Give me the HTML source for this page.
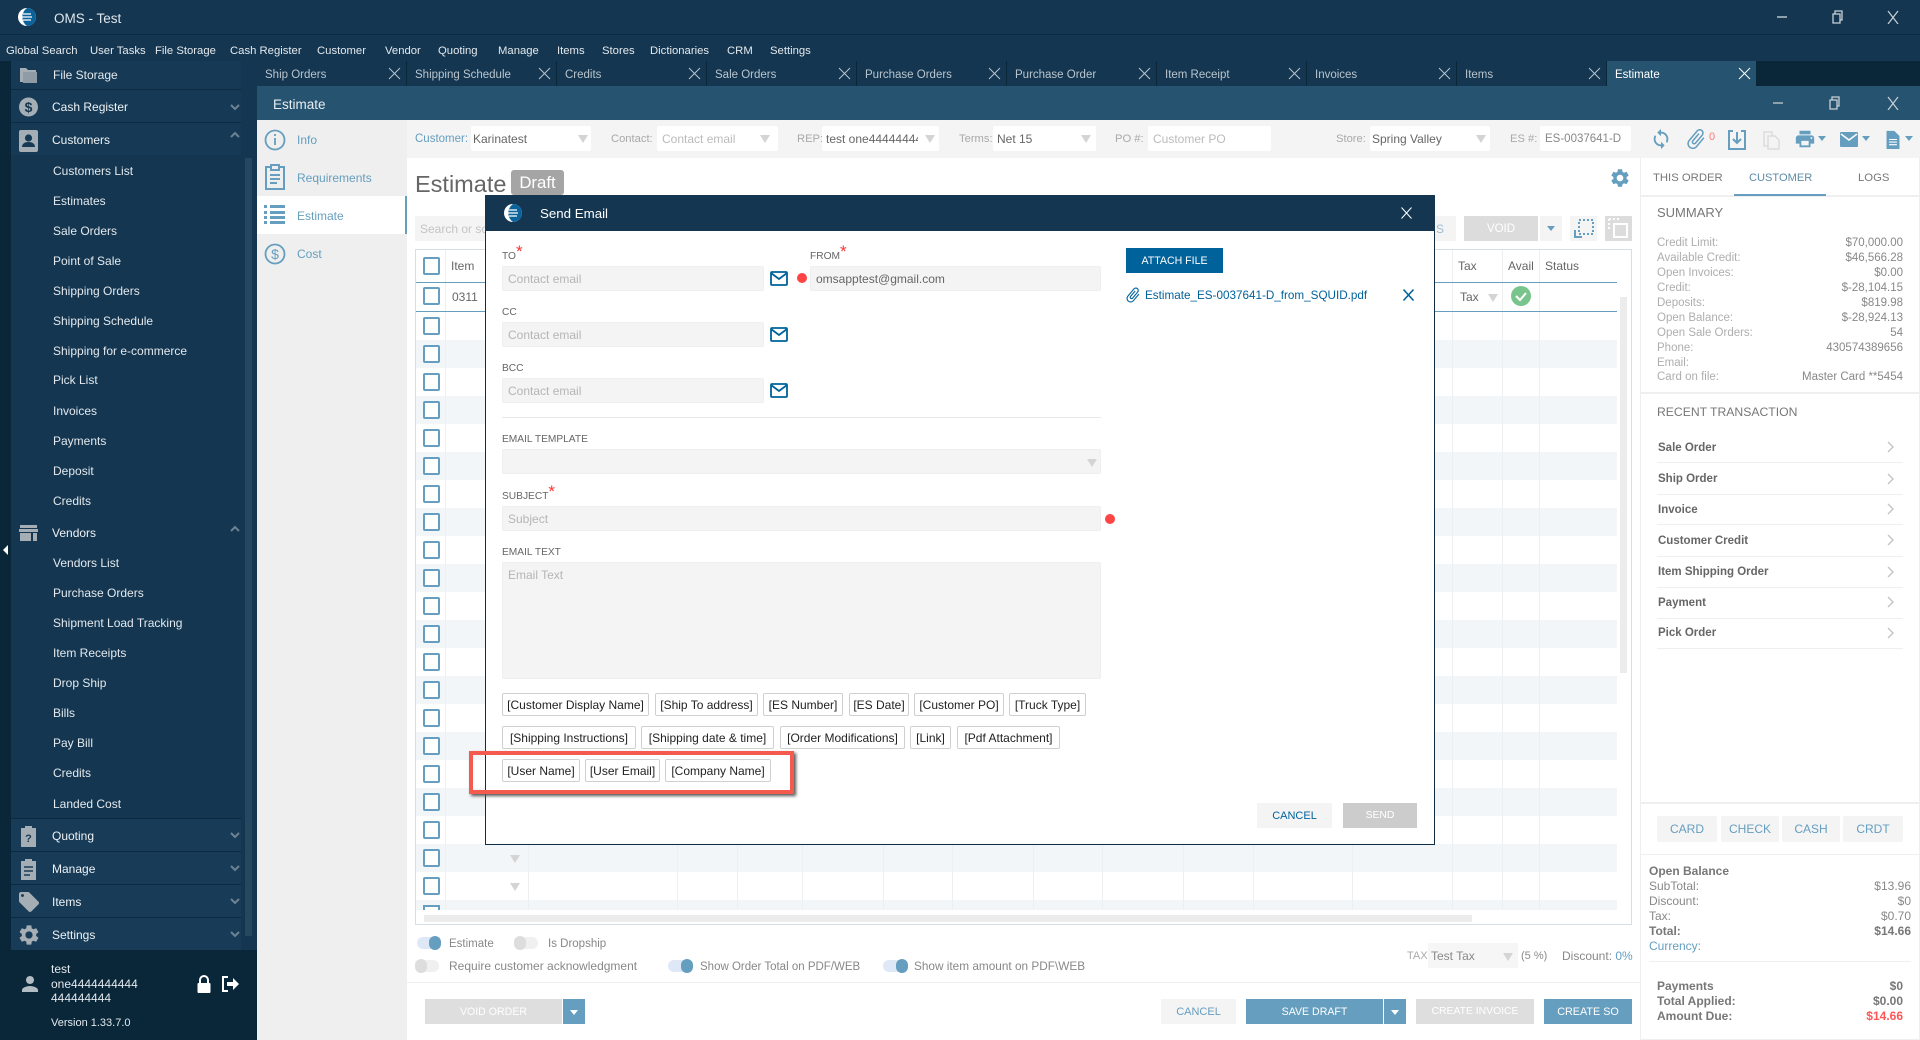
<!DOCTYPE html>
<html lang="en"><head><meta charset="utf-8"><title>OMS - Test</title>
<style>
html,body{margin:0;padding:0;width:1920px;height:1040px;overflow:hidden;background:#fff;font-family:"Liberation Sans",sans-serif;font-size:12px;color:#666}
div,span,svg{position:absolute;box-sizing:border-box}
.t{white-space:nowrap;line-height:16px;height:16px}
.mn{color:#e3e9ee;top:43px;font-size:11.3px}
.tab{top:61px;height:25px;width:149px;background:#143650;color:#b9c5ce;line-height:29px;padding-left:8px;white-space:nowrap;font-size:11.5px}
.x{top:6px;left:131px;width:13px;height:13px}
.s{color:#e3e9ee;left:53px}
.p{color:#eef2f5;left:52px}
.ln{left:11px;width:230px;height:1px;background:#0c2b42}
.lab{color:#9ab8cb}
.gl{color:#a9a9a9;font-size:11.2px}
.f{background:#fff;height:25px;top:126px;border-radius:2px}
.c{width:0;height:0;border-left:5px solid transparent;border-right:5px solid transparent;border-top:8px solid #d4d4d4}
.cb{left:423px;width:17px;height:18px;border:2px solid #659ebf;border-radius:2px;background:#fff}
.v{top:250px;width:1px;height:660px;background:#edf0f2}
.st{left:416px;width:1201px;height:28px;background:#f3f6f9}
.sr{left:1657px;color:#aeaeae;font-size:11.5px}
.sv{right:17px;color:#888;font-size:11.5px}
.rt{left:1658px;color:#666;font-weight:bold;font-size:11.5px}
.sep{left:1641px;width:278px;height:1px;background:#efefef}
.ml{color:#666;left:502px;font-size:10.2px}
.in{background:#f4f4f4;border:1px solid #efefef;border-radius:2px;height:25px}
.ph{color:#b5b5b5;left:508px}
.star{color:#f33;font-size:17px;line-height:0;vertical-align:2px;position:static}
.tag{border:1px solid #d0d0d0;border-radius:2px;background:#fff;color:#222;height:23px;line-height:23px;text-align:center;white-space:nowrap;font-size:12px}
.btn{height:25px;line-height:26px;text-align:center;white-space:nowrap;font-size:10.6px}
.pb{top:816px;height:26px;line-height:26px;background:#f4f4f4;color:#659ebf;text-align:center;border-radius:2px}
.tg{width:24px;height:12px;border-radius:6px}
.kn{width:12px;height:14px;border-radius:7px}
.o{left:1649px;color:#888}
.ov{right:9px;color:#888}
.b{font-weight:bold;color:#777}
</style></head><body>

<!-- title + menu -->
<div style="left:0;top:0;width:1920px;height:61px;background:#143650"></div>
<div style="left:0;top:34px;width:1920px;height:1px;background:#0b2a40"></div>
<svg style="left:17px;top:7px" width="20" height="20" viewBox="0 0 20 20"><circle cx="10" cy="10" r="9" fill="#fff"/><path d="M10 1a9 9 0 0 1 0 18A11 11 0 0 1 10 1z" fill="#0b639c"/><path d="M6 7h8M5 10h10M6 13h8" stroke="#fff" stroke-width="1.200"/></svg>
<div class="t" style="left:54px;top:11px;color:#dfe6eb;font-size:13.500px">OMS - Test</div>
<svg style="left:1777px;top:10px" width="130" height="14" viewBox="0 0 130 14" fill="none" stroke="#c8d1d8"><path d="M0 7h10" stroke-width="2" stroke="#8fa0ad"/><path d="M56 4h7v9h-7zM58 4V1h7v9h-2" stroke-width="1.300"/><path d="M111 1l10 13M121 1l-10 13" stroke-width="1.200"/></svg>
<div class="t mn" style="left:6px">Global Search</div>
<div class="t mn" style="left:90px">User Tasks</div>
<div class="t mn" style="left:155px">File Storage</div>
<div class="t mn" style="left:230px">Cash Register</div>
<div class="t mn" style="left:317px">Customer</div>
<div class="t mn" style="left:385px">Vendor</div>
<div class="t mn" style="left:438px">Quoting</div>
<div class="t mn" style="left:498px">Manage</div>
<div class="t mn" style="left:557px">Items</div>
<div class="t mn" style="left:602px">Stores</div>
<div class="t mn" style="left:650px">Dictionaries</div>
<div class="t mn" style="left:727px">CRM</div>
<div class="t mn" style="left:770px">Settings</div>

<!-- sidebar -->
<div style="left:0;top:61px;width:257px;height:979px;background:#0a2639"></div>
<div style="left:11px;top:61px;width:246px;height:889px;background:#143650"></div>
<div style="left:245px;top:158px;width:7px;height:778px;background:#25475f"></div>
<div style="left:11px;top:61px;width:230px;height:28px;background:#163a55"></div>
<div style="left:11px;top:89px;width:230px;height:66px;background:#163a55"></div>
<div style="left:11px;top:818px;width:230px;height:132px;background:#183c58"></div>
<div class="ln" style="top:89px"></div><div class="ln" style="top:122px"></div><div class="ln" style="top:155px;background:transparent"></div>
<div class="ln" style="top:818px"></div><div class="ln" style="top:851px"></div><div class="ln" style="top:884px"></div><div class="ln" style="top:917px"></div>
<div style="left:3px;top:545px;width:0;height:0;border-top:5px solid transparent;border-bottom:5px solid transparent;border-right:5px solid #fff"></div>

<svg style="left:18px;top:66px" width="20" height="18" viewBox="0 0 20 18" fill="#a5aeb4"><path d="M2 2h6l2 2h8v2H5v10H2z"/><path d="M5 6h14v11H5z" opacity=".85"/></svg>
<svg style="left:19px;top:96px" width="19" height="22" viewBox="0 0 19 22"><circle cx="9.500" cy="11" r="9.500" fill="#a5aeb4"/><text x="9.500" y="16" text-anchor="middle" font-size="14" font-weight="bold" fill="#143650" font-family="Liberation Sans">$</text></svg>
<svg style="left:19px;top:130px" width="19" height="22" viewBox="0 0 19 22"><rect width="19" height="22" rx="2" fill="#a5aeb4"/><circle cx="9.500" cy="8" r="3.600" fill="#163a55"/><path d="M3 17c0-3.500 3-5 6.500-5s6.500 1.500 6.500 5z" fill="#163a55"/></svg>
<svg style="left:19px;top:525px" width="19" height="16" viewBox="0 0 19 16" fill="#a5aeb4"><path d="M1 0h17v3H1zM0 4h19v3H0zM1 8h11v8H1zM14 8h4v8h-4z"/></svg>
<svg style="left:20px;top:825px" width="17" height="22" viewBox="0 0 17 22"><path d="M1 3h4V1h7v2h4v19H1z" fill="#a5aeb4"/><text x="8.500" y="17" text-anchor="middle" font-size="11" font-weight="bold" fill="#183c58" font-family="Liberation Sans">?</text></svg>
<svg style="left:20px;top:858px" width="17" height="22" viewBox="0 0 17 22"><path d="M1 3h4V1h7v2h4v19H1z" fill="#a5aeb4"/><path d="M4 9h9M4 13h9M4 17h6" stroke="#183c58" stroke-width="1.500"/></svg>
<svg style="left:17px;top:890px" width="24" height="24" viewBox="0 0 24 24" fill="#a5aeb4"><path d="M21.410 11.580l-9-9C12.050 2.220 11.550 2 11 2H4c-1.100 0-2 .9-2 2v7c0 .55.220 1.050.590 1.420l9 9c.36.36.86.580 1.410.580.55 0 1.050-.22 1.410-.59l7-7c.37-.36.590-.86.590-1.410 0-.55-.23-1.060-.59-1.420zM5.500 7C4.670 7 4 6.330 4 5.500S4.670 4 5.500 4 7 4.670 7 5.500 6.330 7 5.500 7z"/></svg>
<svg style="left:17px;top:923px" width="24" height="24" viewBox="0 0 24 24" fill="#a5aeb4"><path d="M19.140 12.940c.04-.3.060-.61.060-.94 0-.32-.02-.64-.07-.94l2.030-1.580c.18-.14.230-.41.120-.61l-1.920-3.320c-.12-.22-.37-.29-.59-.22l-2.390.96c-.5-.38-1.030-.7-1.620-.94l-.36-2.540c-.04-.24-.24-.41-.48-.41h-3.840c-.24 0-.43.17-.47.41l-.36 2.540c-.59.24-1.130.57-1.620.94l-2.390-.96c-.22-.08-.47 0-.59.22L2.740 8.870c-.12.21-.08.47.12.61l2.030 1.580c-.05.3-.09.63-.09.94s.02.64.07.94l-2.030 1.580c-.18.14-.23.41-.12.61l1.920 3.320c.12.22.37.29.59.22l2.390-.96c.5.38 1.030.7 1.620.94l.36 2.540c.05.24.24.41.48.41h3.840c.24 0 .44-.17.47-.41l.36-2.540c.59-.24 1.130-.56 1.620-.94l2.390.96c.22.08.47 0 .59-.22l1.920-3.320c.12-.22.070-.47-.12-.61l-2.010-1.580zM12 15.600c-1.980 0-3.600-1.620-3.600-3.600s1.620-3.600 3.600-3.600 3.600 1.620 3.600 3.600-1.620 3.600-3.600 3.600z"/></svg>

<svg style="left:230px;top:100px" width="10" height="850" viewBox="0 0 10 850" fill="none" stroke="#6d8293" stroke-width="2"><path d="M1 5l4 4 4-4M1 37l4-4 4 4M1 431l4-4 4 4M1 733l4 4 4-4M1 766l4 4 4-4M1 799l4 4 4-4M1 832l4 4 4-4"/></svg>

<div class="t s" style="top:67px">File Storage</div>
<div class="t p" style="top:99px">Cash Register</div>
<div class="t p" style="top:132px">Customers</div>
<div class="t s" style="top:163px">Customers List</div>
<div class="t s" style="top:193px">Estimates</div>
<div class="t s" style="top:223px">Sale Orders</div>
<div class="t s" style="top:253px">Point of Sale</div>
<div class="t s" style="top:283px">Shipping Orders</div>
<div class="t s" style="top:313px">Shipping Schedule</div>
<div class="t s" style="top:343px">Shipping for e-commerce</div>
<div class="t s" style="top:372px">Pick List</div>
<div class="t s" style="top:403px">Invoices</div>
<div class="t s" style="top:433px">Payments</div>
<div class="t s" style="top:463px">Deposit</div>
<div class="t s" style="top:493px">Credits</div>
<div class="t p" style="top:525px">Vendors</div>
<div class="t s" style="top:555px">Vendors List</div>
<div class="t s" style="top:585px">Purchase Orders</div>
<div class="t s" style="top:615px">Shipment Load Tracking</div>
<div class="t s" style="top:645px">Item Receipts</div>
<div class="t s" style="top:675px">Drop Ship</div>
<div class="t s" style="top:705px">Bills</div>
<div class="t s" style="top:735px">Pay Bill</div>
<div class="t s" style="top:765px">Credits</div>
<div class="t s" style="top:796px">Landed Cost</div>
<div class="t p" style="top:828px">Quoting</div>
<div class="t p" style="top:861px">Manage</div>
<div class="t p" style="top:894px">Items</div>
<div class="t p" style="top:927px">Settings</div>

<svg style="left:18px;top:972px" width="24" height="24" viewBox="0 0 24 24" fill="#b2bcc3"><path d="M12 12c2.210 0 4-1.790 4-4s-1.790-4-4-4-4 1.790-4 4 1.790 4 4 4zm0 2c-2.670 0-8 1.340-8 4v2h16v-2c0-2.660-5.330-4-8-4z"/></svg>
<div class="t s" style="left:51px;top:961px">test</div>
<div class="t s" style="left:51px;top:976px">one4444444444</div>
<div class="t s" style="left:51px;top:990px">444444444</div>
<div class="t s" style="left:51px;top:1015px;font-size:11px">Version 1.33.7.0</div>
<svg style="left:196px;top:975px" width="16" height="18" viewBox="0 0 16 18"><path d="M4 8V5a4 4 0 0 1 8 0v3" fill="none" stroke="#fff" stroke-width="2"/><rect x="1.500" y="8" width="13" height="10" rx="1" fill="#fff"/></svg>
<svg style="left:221px;top:975px" width="18" height="18" viewBox="0 0 18 18"><path d="M7 2H2v14h5" fill="none" stroke="#fff" stroke-width="2"/><path d="M6 7h6V3l6 6-6 6v-4H6z" fill="#fff"/></svg>

<!-- tabs -->
<div style="left:257px;top:61px;width:1663px;height:25px;background:#0a2639"></div>
<div class="tab" style="left:257px">Ship Orders<svg class="x" viewBox="0 0 13 13" stroke="#b9c5ce" fill="none"><path d="M1 1l11 11M12 1L1 12"/></svg></div>
<div class="tab" style="left:407px">Shipping Schedule<svg class="x" viewBox="0 0 13 13" stroke="#b9c5ce" fill="none"><path d="M1 1l11 11M12 1L1 12"/></svg></div>
<div class="tab" style="left:557px">Credits<svg class="x" viewBox="0 0 13 13" stroke="#b9c5ce" fill="none"><path d="M1 1l11 11M12 1L1 12"/></svg></div>
<div class="tab" style="left:707px">Sale Orders<svg class="x" viewBox="0 0 13 13" stroke="#b9c5ce" fill="none"><path d="M1 1l11 11M12 1L1 12"/></svg></div>
<div class="tab" style="left:857px">Purchase Orders<svg class="x" viewBox="0 0 13 13" stroke="#b9c5ce" fill="none"><path d="M1 1l11 11M12 1L1 12"/></svg></div>
<div class="tab" style="left:1007px">Purchase Order<svg class="x" viewBox="0 0 13 13" stroke="#b9c5ce" fill="none"><path d="M1 1l11 11M12 1L1 12"/></svg></div>
<div class="tab" style="left:1157px">Item Receipt<svg class="x" viewBox="0 0 13 13" stroke="#b9c5ce" fill="none"><path d="M1 1l11 11M12 1L1 12"/></svg></div>
<div class="tab" style="left:1307px">Invoices<svg class="x" viewBox="0 0 13 13" stroke="#b9c5ce" fill="none"><path d="M1 1l11 11M12 1L1 12"/></svg></div>
<div class="tab" style="left:1457px">Items<svg class="x" viewBox="0 0 13 13" stroke="#b9c5ce" fill="none"><path d="M1 1l11 11M12 1L1 12"/></svg></div>
<div class="tab" style="left:1607px;background:#26536f;color:#fff">Estimate<svg class="x" viewBox="0 0 13 13" stroke="#fff" fill="none"><path d="M1 1l11 11M12 1L1 12"/></svg></div>

<!-- window header -->
<div style="left:257px;top:86px;width:1663px;height:34px;background:#26536f"></div>
<div class="t" style="left:273px;top:97px;color:#e8eef2;font-size:13.500px">Estimate</div>
<svg style="left:1773px;top:96px" width="134" height="14" viewBox="0 0 134 14" fill="none" stroke="#c8d1d8"><path d="M0 7h10" stroke-width="2" stroke="#8fa0ad"/><path d="M57 4h7v9h-7zM59 4V1h7v9h-2" stroke-width="1.300"/><path d="M115 1l10 13M125 1l-10 13" stroke-width="1.200"/></svg>

<!-- subnav -->
<div style="left:257px;top:120px;width:150px;height:920px;background:#efefef"></div>
<div style="left:257px;top:196px;width:150px;height:38px;background:#fff;border-right:2px solid #659ebf"></div>
<svg style="left:264px;top:128px" width="22" height="24" viewBox="0 0 22 24" fill="none" stroke="#659ebf" stroke-width="1.800"><circle cx="11" cy="12" r="9.500"/><path d="M11 10v7M11 6v2"/></svg>
<svg style="left:264px;top:164px" width="22" height="26" viewBox="0 0 22 26" fill="none" stroke="#659ebf" stroke-width="2"><path d="M7 3H2v22h18V3h-5"/><path d="M7 1h8v5H7zM6 11h10M6 15h10M6 19h7"/></svg>
<svg style="left:264px;top:205px" width="21" height="20" viewBox="0 0 21 20" fill="#659ebf"><path d="M0 0h3v3H0zM6 0h15v3H6zM0 6h3v3H0zM6 6h15v3H6zM0 11h3v3H0zM6 11h15v3H6zM0 16h3v3H0zM6 16h15v3H6z"/></svg>
<svg style="left:264px;top:242px" width="22" height="24" viewBox="0 0 22 24"><circle cx="11" cy="12" r="9.500" fill="none" stroke="#659ebf" stroke-width="1.800"/><text x="11" y="17" text-anchor="middle" font-size="14" fill="#659ebf" font-family="Liberation Sans">$</text></svg>
<div class="t" style="left:297px;top:132px;color:#659ebf">Info</div>
<div class="t" style="left:297px;top:170px;color:#659ebf">Requirements</div>
<div class="t" style="left:297px;top:208px;color:#659ebf">Estimate</div>
<div class="t" style="left:297px;top:246px;color:#659ebf">Cost</div>

<!-- top form row -->
<div style="left:407px;top:120px;width:1513px;height:38px;background:#f4f4f4"></div>
<div class="t" style="left:415px;top:131px;color:#659ebf;font-size:11.500px">Customer:</div>
<div class="f" style="left:471px;width:120px"></div><div class="t" style="left:473px;top:131px;color:#666">Karinatest</div><div class="c" style="left:578px;top:135px"></div>
<div class="t gl" style="left:611px;top:131px">Contact:</div>
<div class="f" style="left:657px;width:121px"></div><div class="t" style="left:662px;top:131px;color:#bbb">Contact email</div><div class="c" style="left:760px;top:135px"></div>
<div class="t gl" style="left:797px;top:131px">REP:</div>
<div class="f" style="left:822px;width:117px"></div><div class="t" style="left:826px;top:131px;color:#666;width:92px;overflow:hidden">test one4444444444</div><div class="c" style="left:925px;top:135px"></div>
<div class="t gl" style="left:959px;top:131px">Terms:</div>
<div class="f" style="left:993px;width:103px"></div><div class="t" style="left:997px;top:131px;color:#666">Net 15</div><div class="c" style="left:1081px;top:135px"></div>
<div class="t gl" style="left:1115px;top:131px">PO #:</div>
<div class="f" style="left:1148px;width:123px"></div><div class="t" style="left:1153px;top:131px;color:#bbb">Customer PO</div>
<div class="t gl" style="left:1336px;top:131px">Store:</div>
<div class="f" style="left:1370px;width:120px"></div><div class="t" style="left:1372px;top:131px;color:#666">Spring Valley</div><div class="c" style="left:1476px;top:135px"></div>
<div class="t gl" style="left:1510px;top:131px">ES #:</div>
<div class="f" style="left:1540px;width:91px"></div><div class="t" style="left:1545px;top:131px;color:#888;font-size:11.500px">ES-0037641-D</div>

<!-- right toolbar icons -->
<svg style="left:1650px;top:128px" width="22" height="22" viewBox="0 0 24 24" fill="#659ebf"><path d="M12 4V1L8 5l4 4V6c3.310 0 6 2.690 6 6 0 1.010-.25 1.970-.7 2.800l1.460 1.460C19.540 15.030 20 13.570 20 12c0-4.420-3.580-8-8-8zm0 14c-3.310 0-6-2.690-6-6 0-1.010.25-1.970.7-2.800L5.240 7.740C4.460 8.970 4 10.430 4 12c0 4.420 3.580 8 8 8v3l4-4-4-4v3z"/></svg>
<svg style="left:1684px;top:127px" width="24" height="24" viewBox="0 0 24 24" fill="#659ebf"><g transform="rotate(40 12 12)"><path d="M16.500 6v11.500c0 2.210-1.790 4-4 4s-4-1.790-4-4V5c0-1.380 1.120-2.500 2.500-2.500s2.500 1.120 2.500 2.500v10.500c0 .55-.45 1-1 1s-1-.45-1-1V6H10v9.500c0 1.380 1.120 2.500 2.500 2.500s2.500-1.120 2.500-2.500V5c0-2.210-1.790-4-4-4S7 2.790 7 5v12.500c0 3.040 2.460 5.500 5.500 5.500s5.500-2.460 5.500-5.500V6h-1.500z"/></g></svg>
<div class="t" style="left:1709px;top:129px;color:#f77;font-size:11px">0</div>
<svg style="left:1728px;top:130px" width="18" height="20" viewBox="0 0 18 20" fill="none" stroke="#659ebf" stroke-width="2"><path d="M5 1H1v18h16V1h-4M9 2v11M5 9l4 4 4-4"/></svg>
<svg style="left:1763px;top:131px" width="17" height="19" viewBox="0 0 17 19" fill="none" stroke="#dcdcdc" stroke-width="1.500"><path d="M1 1h8v4H5v10H1zM5 5h7l4 4v9H5z"/></svg>
<svg style="left:1794px;top:128px" width="22" height="22" viewBox="0 0 24 24" fill="#659ebf"><path d="M19 8H5c-1.660 0-3 1.340-3 3v6h4v4h12v-4h4v-6c0-1.660-1.340-3-3-3zm-3 11H8v-5h8v5zm3-7c-.55 0-1-.45-1-1s.45-1 1-1 1 .45 1 1-.45 1-1 1zm-1-9H6v4h12V3z"/></svg>
<div class="c" style="left:1818px;top:136px;border-left-width:4px;border-right-width:4px;border-top:5px solid #659ebf"></div>
<svg style="left:1840px;top:132px" width="18" height="15" viewBox="0 0 18 15"><rect width="18" height="15" fill="#659ebf" rx="1"/><path d="M1 2l8 6 8-6" fill="none" stroke="#fff" stroke-width="1.500"/></svg>
<div class="c" style="left:1862px;top:136px;border-left-width:4px;border-right-width:4px;border-top:5px solid #659ebf"></div>
<svg style="left:1886px;top:130px" width="14" height="19" viewBox="0 0 15 22"><path d="M0 1h9l6 6v15H0z" fill="#659ebf"/><path d="M3 11h9M3 14h9M3 17h9" stroke="#fff" stroke-width="1.300"/></svg>
<div class="c" style="left:1905px;top:136px;border-left-width:4px;border-right-width:4px;border-top:5px solid #659ebf"></div>

<!-- main body -->
<div class="t" style="left:415px;top:169px;height:30px;line-height:30px;font-size:23.500px;color:#666">Estimate</div>
<div style="left:511px;top:170px;width:53px;height:25px;line-height:26px;background:#a5a5a5;border-radius:3px;color:#fff;text-align:center;font-size:16.800px">Draft</div>
<svg style="left:1609px;top:167px" width="22" height="22" viewBox="0 0 24 24" fill="#659ebf"><path d="M19.140 12.940c.04-.3.060-.61.060-.94 0-.32-.02-.64-.07-.94l2.030-1.580c.18-.14.230-.41.120-.61l-1.920-3.320c-.12-.22-.37-.29-.59-.22l-2.390.96c-.5-.38-1.030-.7-1.620-.94l-.36-2.540c-.04-.24-.24-.41-.48-.41h-3.840c-.24 0-.43.17-.47.41l-.36 2.540c-.59.24-1.130.57-1.620.94l-2.390-.96c-.22-.08-.47 0-.59.22L2.740 8.870c-.12.21-.08.47.12.61l2.030 1.580c-.05.3-.09.63-.09.94s.02.64.07.94l-2.030 1.580c-.18.14-.23.41-.12.61l1.920 3.320c.12.22.37.29.59.22l2.390-.96c.5.38 1.030.7 1.620.94l.36 2.540c.05.24.24.41.48.41h3.840c.24 0 .44-.17.47-.41l.36-2.540c.59-.24 1.130-.56 1.620-.94l2.390.96c.22.08.47 0 .59-.22l1.920-3.320c.12-.22.070-.47-.12-.61l-2.010-1.580zM12 15.600c-1.980 0-3.600-1.620-3.600-3.600s1.620-3.600 3.600-3.600 3.600 1.620 3.600 3.600-1.620 3.600-3.600 3.600z"/></svg>

<div style="left:415px;top:216px;width:1041px;height:25px;background:#f4f4f4"></div>
<div class="t" style="left:420px;top:221px;color:#c4c4c4">Search or scan</div>
<div class="t" style="left:1436px;top:221px;color:#9dbed3">S</div>
<div class="btn" style="left:1464px;top:216px;width:74px;background:#dcdcdc;color:#fff;font-size:11.500px">VOID</div>
<div style="left:1540px;top:216px;width:22px;height:25px;background:#f4f4f4"></div>
<div class="c" style="left:1547px;top:226px;border-left-width:4px;border-right-width:4px;border-top:5px solid #659ebf"></div>
<div style="left:1570px;top:216px;width:27px;height:25px;background:#f4f4f4"></div>
<svg style="left:1574px;top:218px" width="20" height="20" viewBox="0 0 20 20" fill="none" stroke="#659ebf" stroke-width="2"><path d="M1 12v7h7" /><path d="M5 2h14v14H5z" stroke-dasharray="2 2"/></svg>
<div style="left:1605px;top:216px;width:27px;height:25px;background:#dcdcdc"></div>
<svg style="left:1608px;top:218px" width="21" height="21" viewBox="0 0 21 21" fill="none" stroke="#fff" stroke-width="2"><path d="M6 6h13v13H6z"/><path d="M1 1h10" stroke-dasharray="2 2"/><path d="M1 1v10" stroke-dasharray="2 2"/></svg>

<!-- table -->
<div style="left:415px;top:249px;width:1217px;height:676px;border:1px solid #d4dfe6;background:#fff"></div>
<div class="st" style="top:340px"></div><div class="st" style="top:396px"></div><div class="st" style="top:452px"></div><div class="st" style="top:508px"></div><div class="st" style="top:564px"></div><div class="st" style="top:620px"></div><div class="st" style="top:676px"></div><div class="st" style="top:732px"></div><div class="st" style="top:788px"></div><div class="st" style="top:844px"></div><div class="st" style="top:900px;height:10px"></div>
<div class="v" style="left:445px"></div><div class="v" style="left:528px"></div><div class="v" style="left:677px"></div><div class="v" style="left:737px"></div><div class="v" style="left:802px"></div><div class="v" style="left:883px"></div><div class="v" style="left:952px"></div><div class="v" style="left:1033px"></div><div class="v" style="left:1102px"></div><div class="v" style="left:1183px"></div><div class="v" style="left:1253px"></div><div class="v" style="left:1352px"></div><div class="v" style="left:1452px"></div><div class="v" style="left:1502px"></div><div class="v" style="left:1539px"></div>
<div style="left:416px;top:282px;width:1201px;height:1px;background:#659ebf"></div>
<div style="left:416px;top:311px;width:1201px;height:1px;background:#659ebf"></div>
<div class="t" style="left:451px;top:258px;color:#666">Item</div>
<div class="t" style="left:1458px;top:258px;color:#666">Tax</div>
<div class="t" style="left:1508px;top:258px;color:#666">Avail</div>
<div class="t" style="left:1545px;top:258px;color:#666">Status</div>
<div class="t" style="left:452px;top:289px;color:#666">0311</div>
<div class="t" style="left:1460px;top:289px;color:#666">Tax</div>
<div class="c" style="left:1488px;top:294px"></div>
<svg style="left:1511px;top:286px" width="20" height="20" viewBox="0 0 20 20"><circle cx="10" cy="10" r="10" fill="#78c48c"/><path d="M5 10l4 4 6-7" fill="none" stroke="#fff" stroke-width="2"/></svg>
<div class="cb" style="top:257px"></div><div class="cb" style="top:287px"></div><div class="cb" style="top:317px"></div><div class="cb" style="top:345px"></div><div class="cb" style="top:373px"></div><div class="cb" style="top:401px"></div><div class="cb" style="top:429px"></div><div class="cb" style="top:457px"></div><div class="cb" style="top:485px"></div><div class="cb" style="top:513px"></div><div class="cb" style="top:541px"></div><div class="cb" style="top:569px"></div><div class="cb" style="top:597px"></div><div class="cb" style="top:625px"></div><div class="cb" style="top:653px"></div><div class="cb" style="top:681px"></div><div class="cb" style="top:709px"></div><div class="cb" style="top:737px"></div><div class="cb" style="top:765px"></div><div class="cb" style="top:793px"></div><div class="cb" style="top:821px"></div><div class="cb" style="top:849px"></div><div class="cb" style="top:877px"></div>
<div style="left:423px;top:905px;width:17px;height:5px;border:2px solid #659ebf;border-bottom:0;background:#fff"></div>
<div class="c" style="left:510px;top:855px"></div><div class="c" style="left:510px;top:883px"></div>
<div style="left:1620px;top:297px;width:7px;height:376px;background:#ececec"></div>
<div style="left:424px;top:915px;width:1048px;height:7px;background:#ececec"></div>

<!-- toggles -->
<div class="tg" style="left:417px;top:937px;background:#dfe8f6"></div><div class="kn" style="left:429px;top:936px;background:#659ebf"></div>
<div class="t" style="left:449px;top:936px;color:#888;font-size:11.500px">Estimate</div>
<div class="tg" style="left:514px;top:937px;background:#f0f0f0"></div><div class="kn" style="left:514px;top:936px;background:#ddd"></div>
<div class="t" style="left:548px;top:936px;color:#888;font-size:11.500px">Is Dropship</div>
<div class="tg" style="left:415px;top:960px;background:#f0f0f0"></div><div class="kn" style="left:415px;top:959px;background:#ddd"></div>
<div class="t" style="left:449px;top:958px;color:#888">Require customer acknowledgment</div>
<div class="tg" style="left:668px;top:960px;background:#dfe8f6"></div><div class="kn" style="left:681px;top:959px;background:#659ebf"></div>
<div class="t" style="left:700px;top:959px;color:#888;font-size:11.500px">Show Order Total on PDF/WEB</div>
<div class="tg" style="left:883px;top:960px;background:#dfe8f6"></div><div class="kn" style="left:896px;top:959px;background:#659ebf"></div>
<div class="t" style="left:914px;top:958px;color:#888;font-size:11.800px">Show item amount on PDF\WEB</div>
<div class="t" style="left:1407px;top:948px;color:#aaa;font-size:11px">TAX</div>
<div style="left:1428px;top:943px;width:90px;height:25px;background:#f6f6f6"></div>
<div class="t" style="left:1431px;top:948px;color:#888">Test Tax</div><div class="c" style="left:1503px;top:953px"></div>
<div class="t" style="left:1521px;top:948px;color:#888;font-size:11px">(5 %)</div>
<div class="t" style="left:1562px;top:948px;color:#888">Discount: <span style="position:static;color:#659ebf">0%</span></div>

<!-- footer -->
<div style="left:407px;top:982px;width:1233px;height:1px;background:#efefef"></div>
<div class="btn" style="left:425px;top:999px;width:137px;background:#dedede;color:#fff">VOID ORDER</div>
<div style="left:563px;top:999px;width:22px;height:25px;background:#659ebf"></div><div class="c" style="left:570px;top:1010px;border-left-width:4px;border-right-width:4px;border-top:5px solid #fff"></div>
<div class="btn" style="left:1161px;top:999px;width:75px;background:#f4f4f4;color:#659ebf;font-size:11px">CANCEL</div>
<div class="btn" style="left:1246px;top:999px;width:137px;background:#659ebf;color:#fff">SAVE DRAFT</div>
<div style="left:1384px;top:999px;width:22px;height:25px;background:#659ebf"></div><div class="c" style="left:1391px;top:1010px;border-left-width:4px;border-right-width:4px;border-top:5px solid #fff"></div>
<div class="btn" style="left:1416px;top:999px;width:118px;background:#dedede;color:#fff;font-size:10.400px">CREATE INVOICE</div>
<div class="btn" style="left:1544px;top:999px;width:88px;background:#659ebf;color:#fff;font-size:10.800px">CREATE SO</div>

<!-- right panel -->
<div style="left:1640px;top:158px;width:280px;height:882px;background:#fff;border-left:1px solid #efefef;border-right:1px solid #efefef;border-bottom:1px solid #efefef"></div>
<div class="t" style="left:1653px;top:170px;color:#777;font-size:11.300px">THIS ORDER</div>
<div class="t" style="left:1749px;top:170px;color:#5f8ba6;font-size:11.100px">CUSTOMER</div>
<div class="t" style="left:1858px;top:170px;color:#777;font-size:11.300px">LOGS</div>
<div class="sep" style="top:195px;height:2px"></div>
<div style="left:1734px;top:194px;width:92px;height:2px;background:#659ebf"></div>
<div class="t" style="left:1657px;top:205px;color:#777;font-size:13px">SUMMARY</div>
<div class="t sr" style="top:235px">Credit Limit:</div><div class="t sv" style="top:235px">$70,000.00</div>
<div class="t sr" style="top:250px">Available Credit:</div><div class="t sv" style="top:250px">$46,566.28</div>
<div class="t sr" style="top:265px">Open Invoices:</div><div class="t sv" style="top:265px">$0.00</div>
<div class="t sr" style="top:280px">Credit:</div><div class="t sv" style="top:280px">$-28,104.15</div>
<div class="t sr" style="top:295px">Deposits:</div><div class="t sv" style="top:295px">$819.98</div>
<div class="t sr" style="top:310px">Open Balance:</div><div class="t sv" style="top:310px">$-28,924.13</div>
<div class="t sr" style="top:325px">Open Sale Orders:</div><div class="t sv" style="top:325px">54</div>
<div class="t sr" style="top:340px">Phone:</div><div class="t sv" style="top:340px">430574389656</div>
<div class="t sr" style="top:355px">Email:</div>
<div class="t sr" style="top:369px">Card on file:</div><div class="t sv" style="top:369px">Master Card **5454</div>
<div class="sep" style="top:392px;height:2px"></div>
<div class="t" style="left:1657px;top:404px;color:#777;font-size:12.200px">RECENT TRANSACTION</div>
<div class="t rt" style="top:440px">Sale Order</div><div class="sep" style="top:462px;left:1657px;width:246px"></div>
<div class="t rt" style="top:471px">Ship Order</div><div class="sep" style="top:494px;left:1657px;width:246px"></div>
<div class="t rt" style="top:502px">Invoice</div><div class="sep" style="top:524px;left:1657px;width:246px"></div>
<div class="t rt" style="top:533px">Customer Credit</div><div class="sep" style="top:556px;left:1657px;width:246px"></div>
<div class="t rt" style="top:564px">Item Shipping Order</div><div class="sep" style="top:587px;left:1657px;width:246px"></div>
<div class="t rt" style="top:595px">Payment</div><div class="sep" style="top:618px;left:1657px;width:246px"></div>
<div class="t rt" style="top:625px">Pick Order</div><div class="sep" style="top:648px;left:1657px;width:246px"></div>
<svg style="left:1887px;top:441px" width="8" height="200" viewBox="0 0 8 200" fill="none" stroke="#c4c4c4" stroke-width="1.400"><path d="M1 1l5 5-5 5M1 33l5 5-5 5M1 63l5 5-5 5M1 94l5 5-5 5M1 126l5 5-5 5M1 156l5 5-5 5M1 187l5 5-5 5"/></svg>
<div class="sep" style="top:802px;height:2px"></div>
<div class="pb" style="left:1657px;width:60px">CARD</div><div class="pb" style="left:1721px;width:58px">CHECK</div><div class="pb" style="left:1782px;width:58px">CASH</div><div class="pb" style="left:1843px;width:60px">CRDT</div>
<div class="sep" style="top:854px"></div>
<div class="t o b" style="top:863px">Open Balance</div>
<div class="t o" style="top:878px">SubTotal:</div><div class="t ov" style="top:878px">$13.96</div>
<div class="t o" style="top:893px">Discount:</div><div class="t ov" style="top:893px">$0</div>
<div class="t o" style="top:908px">Tax:</div><div class="t ov" style="top:908px">$0.70</div>
<div class="t o b" style="top:923px">Total:</div><div class="t ov b" style="top:923px">$14.66</div>
<div class="t o" style="top:938px;color:#659ebf">Currency:</div>
<div style="left:1649px;top:961px;width:262px;height:1px;background:#efefef"></div>
<div class="t o b" style="left:1657px;top:978px">Payments</div><div class="t ov b" style="right:17px;top:978px">$0</div>
<div class="t o b" style="left:1657px;top:993px">Total Applied:</div><div class="t ov b" style="right:17px;top:993px">$0.00</div>
<div class="t o b" style="left:1657px;top:1008px">Amount Due:</div><div class="t ov b" style="right:17px;top:1008px;color:#f55">$14.66</div>

<!-- modal -->
<div style="left:485px;top:195px;width:950px;height:650px;background:#fff;border:1px solid #0e2c44"></div>
<div style="left:485px;top:195px;width:950px;height:36px;background:#143650"></div>
<svg style="left:503px;top:203px" width="20" height="20" viewBox="0 0 20 20"><circle cx="10" cy="10" r="9" fill="#fff"/><path d="M10 1a9 9 0 0 1 0 18A11 11 0 0 1 10 1z" fill="#0b639c"/><path d="M6 7h8M5 10h10M6 13h8" stroke="#fff" stroke-width="1.200"/></svg>
<div class="t" style="left:540px;top:206px;color:#fff;font-size:13.300px">Send Email</div>
<svg style="left:1401px;top:207px" width="11" height="12" viewBox="0 0 11 12" fill="none" stroke="#fff"><path d="M.5.5l10 11M10.500.5l-10 11"/></svg>

<div class="t ml" style="top:249px">TO<span class="star">*</span></div>
<div class="in" style="left:502px;top:266px;width:262px"></div><div class="t ph" style="top:271px">Contact email</div>
<svg style="left:770px;top:271px" width="18" height="15" viewBox="0 0 18 15" fill="none" stroke="#00629b" stroke-width="1.800"><rect x="1" y="1" width="16" height="13" rx="1"/><path d="M1 2l8 6 8-6"/></svg>
<div style="left:797px;top:273px;width:10px;height:10px;border-radius:5px;background:#f44"></div>
<div class="t ml" style="left:810px;top:249px">FROM<span class="star">*</span></div>
<div class="in" style="left:810px;top:266px;width:291px"></div><div class="t" style="left:816px;top:271px;color:#666">omsapptest@gmail.com</div>

<div class="t ml" style="top:305px">CC</div>
<div class="in" style="left:502px;top:322px;width:262px"></div><div class="t ph" style="top:327px">Contact email</div>
<svg style="left:770px;top:327px" width="18" height="15" viewBox="0 0 18 15" fill="none" stroke="#00629b" stroke-width="1.800"><rect x="1" y="1" width="16" height="13" rx="1"/><path d="M1 2l8 6 8-6"/></svg>

<div class="t ml" style="top:361px">BCC</div>
<div class="in" style="left:502px;top:378px;width:262px"></div><div class="t ph" style="top:383px">Contact email</div>
<svg style="left:770px;top:383px" width="18" height="15" viewBox="0 0 18 15" fill="none" stroke="#00629b" stroke-width="1.800"><rect x="1" y="1" width="16" height="13" rx="1"/><path d="M1 2l8 6 8-6"/></svg>

<div style="left:502px;top:417px;width:599px;height:1px;background:#e8e8e8"></div>
<div class="t ml" style="top:432px">EMAIL TEMPLATE</div>
<div class="in" style="left:502px;top:449px;width:599px"></div><div class="c" style="left:1087px;top:459px"></div>
<div class="t ml" style="top:489px">SUBJECT<span class="star">*</span></div>
<div class="in" style="left:502px;top:506px;width:599px"></div><div class="t ph" style="top:511px">Subject</div>
<div style="left:1105px;top:514px;width:10px;height:10px;border-radius:5px;background:#f44"></div>
<div class="t ml" style="top:545px">EMAIL TEXT</div>
<div class="in" style="left:502px;top:562px;width:599px;height:117px"></div><div class="t ph" style="top:567px">Email Text</div>

<div class="tag" style="left:502px;top:693px;width:147px">[Customer Display Name]</div>
<div class="tag" style="left:655px;top:693px;width:103px">[Ship To address]</div>
<div class="tag" style="left:763px;top:693px;width:80px">[ES Number]</div>
<div class="tag" style="left:849px;top:693px;width:60px">[ES Date]</div>
<div class="tag" style="left:914px;top:693px;width:90px">[Customer PO]</div>
<div class="tag" style="left:1009px;top:693px;width:77px">[Truck Type]</div>
<div class="tag" style="left:502px;top:726px;width:134px">[Shipping Instructions]</div>
<div class="tag" style="left:641px;top:726px;width:133px">[Shipping date &amp; time]</div>
<div class="tag" style="left:780px;top:726px;width:125px">[Order Modifications]</div>
<div class="tag" style="left:910px;top:726px;width:41px">[Link]</div>
<div class="tag" style="left:957px;top:726px;width:103px">[Pdf Attachment]</div>
<div class="tag" style="left:502px;top:759px;width:78px">[User Name]</div>
<div class="tag" style="left:585px;top:759px;width:75px">[User Email]</div>
<div class="tag" style="left:665px;top:759px;width:106px">[Company Name]</div>
<div style="left:469px;top:751px;width:325px;height:43px;border:4px solid #f55a4e;box-shadow:2px 2px 3px #555"></div>

<div class="btn" style="left:1126px;top:248px;width:97px;background:#00629b;color:#fff">ATTACH FILE</div>
<svg style="left:1124px;top:286px" width="18" height="18" viewBox="0 0 24 24" fill="#00629b"><g transform="rotate(40 12 12)"><path d="M16.500 6v11.500c0 2.210-1.790 4-4 4s-4-1.790-4-4V5c0-1.380 1.120-2.500 2.500-2.500s2.500 1.120 2.500 2.500v10.500c0 .55-.45 1-1 1s-1-.45-1-1V6H10v9.500c0 1.380 1.120 2.500 2.500 2.500s2.500-1.120 2.500-2.500V5c0-2.210-1.790-4-4-4S7 2.790 7 5v12.500c0 3.040 2.460 5.500 5.500 5.500s5.500-2.460 5.500-5.500V6h-1.500z"/></g></svg>
<div class="t" style="left:1145px;top:288px;color:#00629b;font-size:11.700px">Estimate_ES-0037641-D_from_SQUID.pdf</div>
<svg style="left:1403px;top:289px" width="11" height="12" viewBox="0 0 11 12" fill="none" stroke="#00629b" stroke-width="1.500"><path d="M.5.5l10 11M10.500.5l-10 11"/></svg>
<div class="btn" style="left:1257px;top:803px;width:75px;background:#f4f4f4;color:#00629b;font-size:11px">CANCEL</div>
<div class="btn" style="left:1343px;top:803px;width:74px;background:#ccc;color:#fff;font-size:10.400px">SEND</div>

</body></html>
